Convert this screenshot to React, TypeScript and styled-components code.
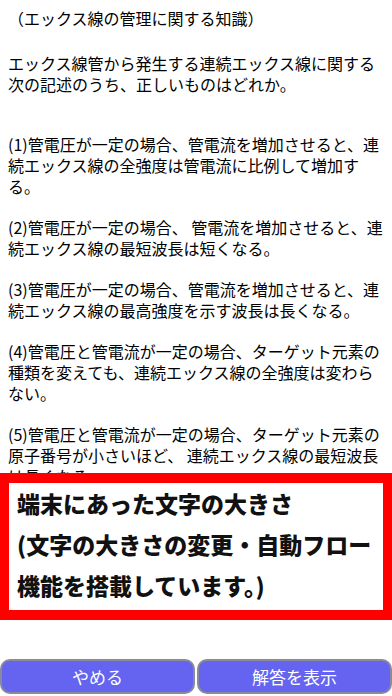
import React from "react";
import styled, { createGlobalStyle } from "styled-components";

const GlobalStyle = createGlobalStyle`
  html, body {
    margin: 0;
    padding: 0;
    background: #ffffff;
  }
  body {
    font-family: "Noto Sans CJK JP", "Noto Sans", sans-serif;
    color: #000;
  }
`;

const Screen = styled.div`
  width: 392px;
  height: 696px;
  display: flex;
  flex-direction: column;
  overflow: hidden;
  background: #fff;
`;

const QuestionArea = styled.div`
  height: 473px;
  flex: none;
  overflow: hidden;
  padding: 8px 8px 0 8px;
  box-sizing: border-box;
`;

const Heading = styled.p`
  margin: 0 0 24px 0;
  font-size: 16px;
  line-height: 21px;
`;

const Paragraph = styled.p<{ $gap?: number }>`
  margin: 0 0 ${(p) => p.$gap ?? 20}px 0;
  font-size: 16px;
  line-height: 21px;
  line-break: strict;
`;

const Banner = styled.div`
  flex: none;
  height: 147px;
  box-sizing: border-box;
  border: 10px solid #ff0000;
  border-left-width: 9px;
  border-right-width: 9px;
  background: #fff;
  padding: 0 8px;
`;

const BannerText = styled.p`
  margin: 0;
  font-size: 23px;
  line-height: 41px;
  font-weight: 900;
  color: #111;
`;

const Spacer = styled.div`
  flex: 1;
`;

const ButtonBar = styled.div`
  display: flex;
  gap: 2px;
  padding: 0 0 2px 0;
`;

const ActionButton = styled.button`
  flex: 1;
  height: 35px;
  border: 2px solid #8a8a9a;
  border-radius: 10px;
  background: #6464f0;
  color: #fff;
  font-family: "Noto Sans CJK JP", sans-serif;
  font-size: 17px;
  padding: 0;
  cursor: pointer;
`;

const choices = [
  "(1)管電圧が一定の場合、管電流を増加させると、連続エックス線の全強度は管電流に比例して増加する。",
  "(2)管電圧が一定の場合、 管電流を増加させると、連続エックス線の最短波長は短くなる。",
  "(3)管電圧が一定の場合、管電流を増加させると、連続エックス線の最高強度を示す波長は長くなる。",
  "(4)管電圧と管電流が一定の場合、ターゲット元素の種類を変えても、連続エックス線の全強度は変わらない。",
  "(5)管電圧と管電流が一定の場合、ターゲット元素の原子番号が小さいほど、 連続エックス線の最短波長は長くなる。",
];

export default function App() {
  return (
    <>
      <GlobalStyle />
      <Screen>
        <QuestionArea>
          <Heading>（エックス線の管理に関する知識）</Heading>
          <Paragraph $gap={39}>
            エックス線管から発生する連続エックス線に関する次の記述のうち、正しいものはどれか。
          </Paragraph>
          {choices.map((c) => (
            <Paragraph key={c}>{c}</Paragraph>
          ))}
        </QuestionArea>
        <Banner>
          <BannerText>
            端末にあった文字の大きさ
            <br />
            (文字の大きさの変更・自動フロー機能を搭載しています。)
          </BannerText>
        </Banner>
        <Spacer />
        <ButtonBar>
          <ActionButton>やめる</ActionButton>
          <ActionButton>解答を表示</ActionButton>
        </ButtonBar>
      </Screen>
    </>
  );
}
